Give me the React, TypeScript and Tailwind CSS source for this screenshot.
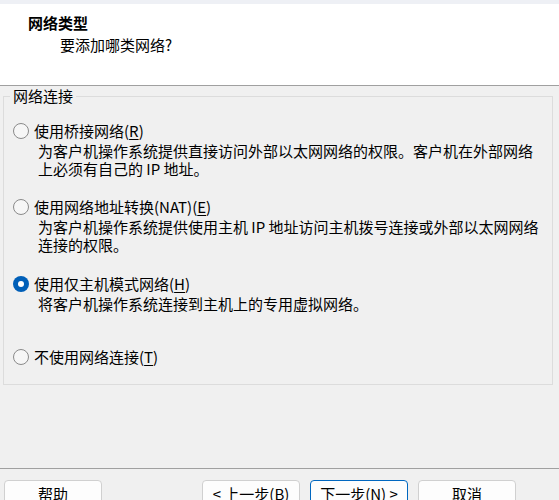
import React from "react";

const font = { fontFamily: '"Noto Sans CJK SC", "Noto Sans", sans-serif' };

interface RadioProps {
  checked?: boolean;
}

const Radio: React.FC<RadioProps> = ({ checked }) =>
  checked ? (
    <span className="w-4 h-4 rounded-full bg-[#005fb8] flex items-center justify-center shrink-0">
      <span className="w-[6px] h-[6px] rounded-full bg-white" />
    </span>
  ) : (
    <span className="w-4 h-4 rounded-full border border-[#8a8a8a] bg-[#f6f6f6] shrink-0" />
  );

const Key: React.FC<{ k: string }> = ({ k }) => (
  <span className="underline underline-offset-2 decoration-1">{k}</span>
);

const Option: React.FC<{
  label: string;
  k: string;
  lines?: string[];
  checked?: boolean;
  className?: string;
}> = ({ label, k, lines = [], checked, className = "" }) => (
  <div className={className}>
    <div className="flex items-center gap-[5px] h-[20px] leading-[20px]">
      <Radio checked={checked} />
      <span>
        {label}(<Key k={k} />)
      </span>
    </div>
    {lines.length > 0 && (
      <div className="mt-[1px] pl-[25px] leading-[18px]">
        {lines.map((l) => (
          <div key={l}>{l}</div>
        ))}
      </div>
    )}
  </div>
);

const Btn: React.FC<{ children: React.ReactNode; primary?: boolean }> = ({ children, primary }) => (
  <button
    className={`w-[98px] h-[28px] rounded-[4px] bg-[#fdfdfd] text-[15px] text-black flex items-center justify-center ${
      primary ? "border border-[#0067c0]" : "border border-[#d0d0d0]"
    }`}
  >
    {children}
  </button>
);

export default function App() {
  return (
    <div className="w-[559px] h-[500px] overflow-hidden bg-[#f0f0f0] text-[15px] text-black" style={font}>
      <div className="h-[4px] bg-[#eef0f5]" />
      <div className="h-[72px] bg-white border-b border-[#a0a0a0] box-content pt-[9px] pl-[28px]">
        <div className="font-bold leading-[20px]">网络类型</div>
        <div className="mt-[2px] pl-[32px] leading-[20px]">要添加哪类网络?</div>
      </div>
      <div className="h-[391px] -mt-[9px] pt-[9px] box-border">
        <fieldset className="ml-[3px] w-[550px] h-[299px] border border-[#dcdcdc] pl-[6px] pt-[15px]">
          <legend className="px-[3px] leading-[20px]">网络连接</legend>
          <div className="pl-[3px]">
            <Option
              label="使用桥接网络"
              k="R"
              lines={[
                "为客户机操作系统提供直接访问外部以太网网络的权限。客户机在外部网络",
                "上必须有自己的 IP 地址。",
              ]}
            />
            <Option
              className="mt-[19px]"
              label="使用网络地址转换(NAT)"
              k="E"
              lines={[
                "为客户机操作系统提供使用主机 IP 地址访问主机拨号连接或外部以太网网络",
                "连接的权限。",
              ]}
            />
            <Option
              className="mt-[20px]"
              label="使用仅主机模式网络"
              k="H"
              checked
              lines={["将客户机操作系统连接到主机上的专用虚拟网络。"]}
            />
            <Option className="mt-[34px]" label="不使用网络连接" k="T" />
          </div>
        </fieldset>
      </div>
      <div className="border-t border-[#a0a0a0] pt-[11px] pl-[4px] pr-[43px] flex">
        <Btn>帮助</Btn>
        <div className="ml-auto flex gap-[10px]">
          <Btn>&lt; 上一步(B)</Btn>
          <Btn primary>下一步(N) &gt;</Btn>
          <Btn>取消</Btn>
        </div>
      </div>
    </div>
  );
}
